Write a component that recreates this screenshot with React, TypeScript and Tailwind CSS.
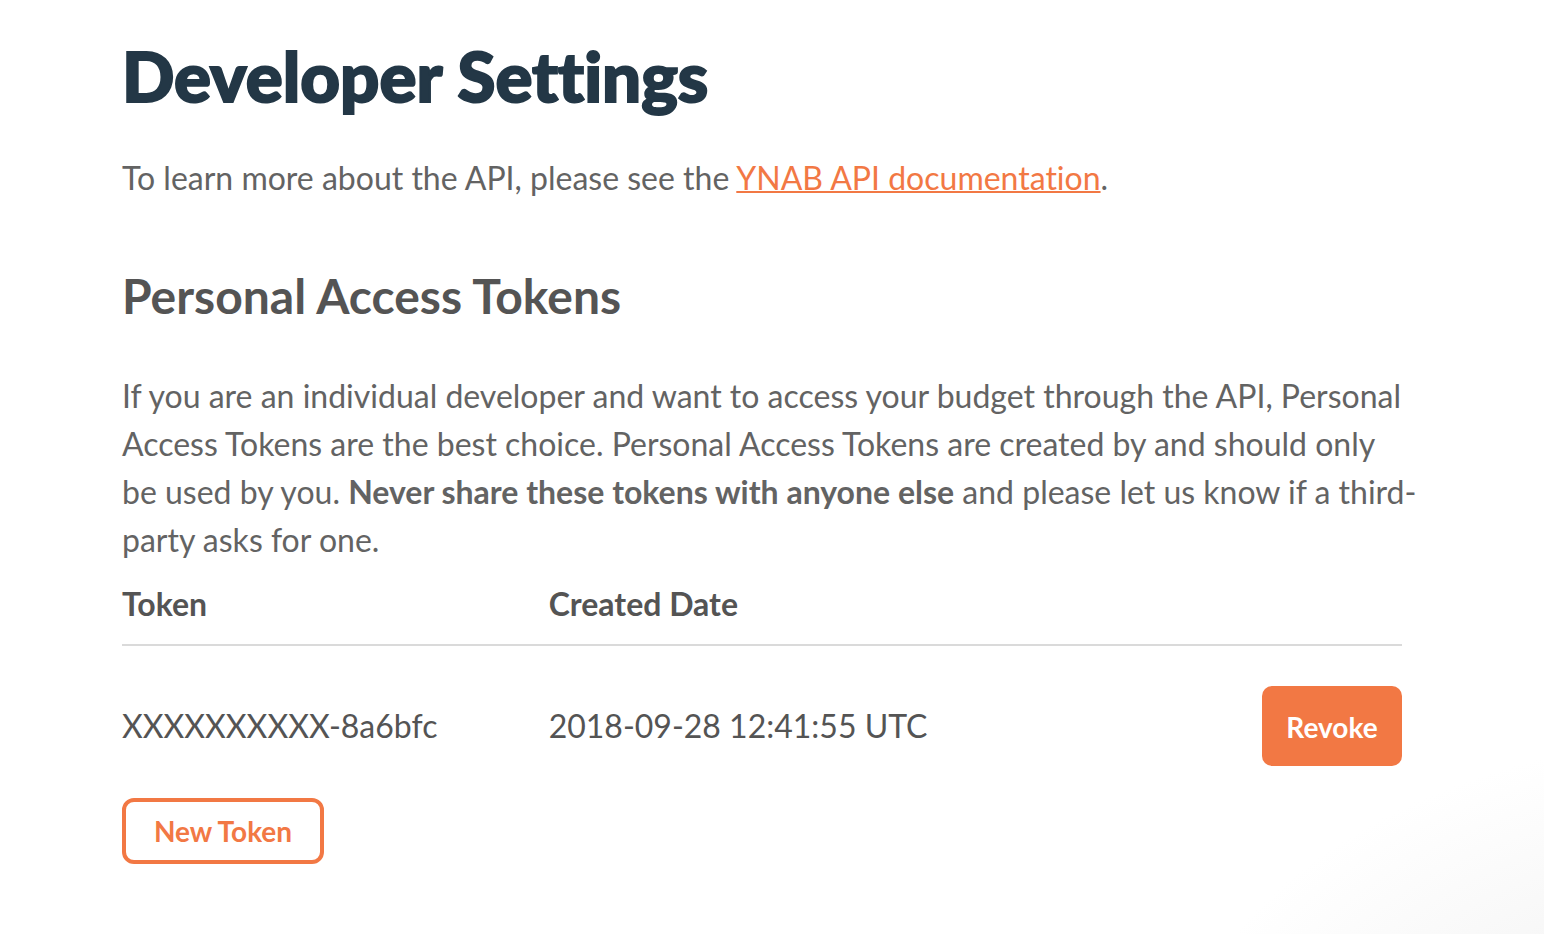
export default function App() {
  return (
    <main className="min-h-screen bg-white bg-[radial-gradient(590px_400px_at_calc(100%+200px)_calc(100%+200px),#ececec_0%,#ffffff_100%)] pl-[122px] pr-[118px] pt-8 pb-10 font-['Lato',sans-serif] text-[32px] leading-[48px] text-[#636363] [font-variant-ligatures:none]">
      <h1 className="font-['Lato_Black','Lato',sans-serif] text-[69px] leading-[88px] font-black text-[#233746] [-webkit-text-stroke:2px_#233746]">Developer Settings</h1>
      <p className="mt-[34px]">
        To learn more about the API, please see the{' '}
        <a href="#documentation" className="text-[#f27844] underline decoration-2">YNAB API documentation</a>.
      </p>
      <h2 className="mt-[60px] text-[48px] leading-[68px] font-bold text-[#545454]">Personal Access Tokens</h2>
      <p className="mt-[42px]">
        If you are an individual developer and want to access your budget through the API, Personal Access Tokens are the best choice. Personal Access Tokens are created by and should only be{'\u00a0'}used by you. <strong className="font-bold">Never share these tokens with anyone else</strong> and please let us know if a third-party asks for one.
      </p>
      <div className="mr-6">
        <table className="mt-4 w-full table-fixed border-collapse text-left text-[#545454]">
          <thead>
            <tr className="border-b-2 border-[#dadada]">
              <th className="w-1/3 pb-4 font-bold">Token</th>
              <th className="w-1/3 pb-4 font-bold">Created Date</th>
              <th className="w-1/3 pb-4" aria-label="Actions"></th>
            </tr>
          </thead>
          <tbody>
            <tr>
              <td className="pt-10">XXXXXXXXXX-8a6bfc</td>
              <td className="pt-10">2018-09-28 12:41:55 UTC</td>
              <td className="pt-10">
                <button type="button" className="ml-auto block h-20 w-[140px] rounded-[10px] bg-[#f27844] pt-[2px] text-[28px] font-bold text-white">Revoke</button>
              </td>
            </tr>
          </tbody>
        </table>
      </div>
      <button type="button" className="mt-8 block h-[66px] w-[202px] rounded-[12px] border-4 border-[#f27844] bg-white text-[28px] font-bold text-[#f27844]">New Token</button>
    </main>
  );
}
